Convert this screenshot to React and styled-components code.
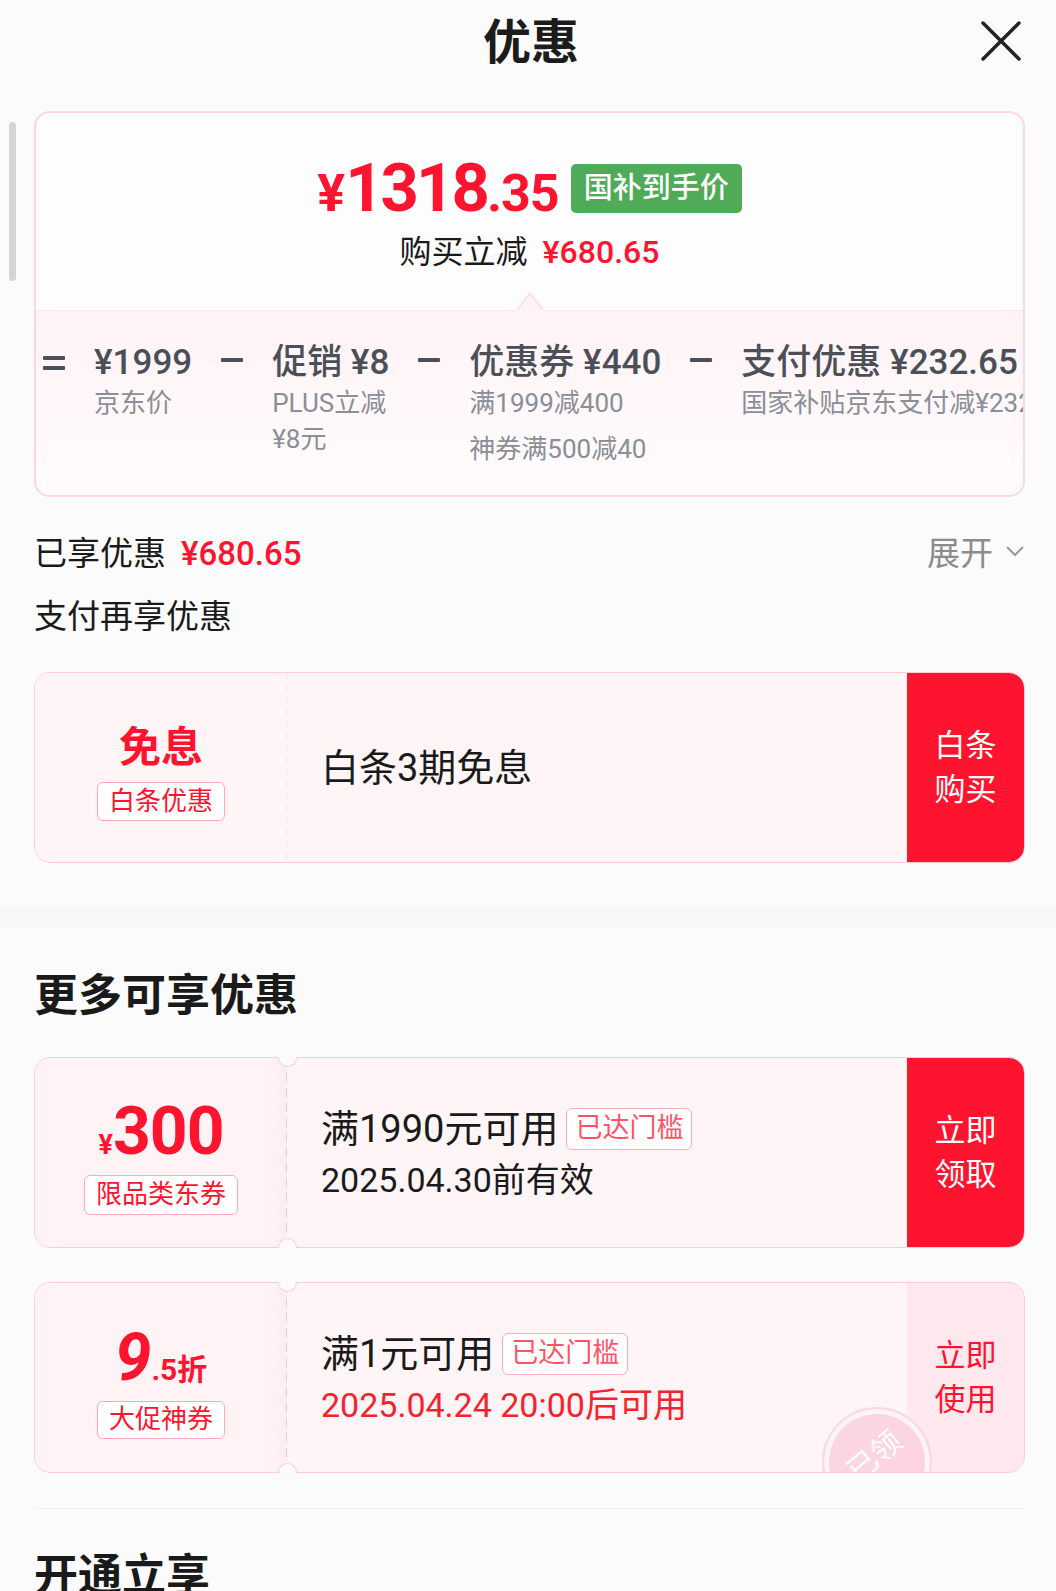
import React from "react"
import styled, { createGlobalStyle } from "styled-components"

const RED = "#ff1430"
const PINK_LINE = "#ffccd7"
const PAGE_BG = "#fbfbfb"

const GlobalStyle = createGlobalStyle`
  html, body { margin: 0; padding: 0; background: ${PAGE_BG}; }
  body { font-family: Roboto, "Noto Sans CJK SC", sans-serif; color: #1a1a1a; }
  * { box-sizing: border-box; }
`

const Page = styled.div`
  position: relative;
  width: 1056px;
  height: 1591px;
  overflow: hidden;
  background: ${PAGE_BG};
`
const ScrollThumb = styled.div`
  position: absolute;
  left: 9px;
  top: 122px;
  width: 7px;
  height: 159px;
  border-radius: 4px;
  background: #d4d4d4;
`
const Header = styled.header`
  display: grid;
  grid-template-columns: 1fr auto 1fr;
  align-items: center;
  height: 86px;
  padding: 0 34px;
`
const Title = styled.h1`
  grid-column: 2;
  margin: 0 0 0 6px;
  font-size: 48px;
  font-weight: 700;
  line-height: 1;
  color: #1c1c1c;
`
const Close = styled.button`
  justify-self: end;
  display: flex;
  width: 42px;
  height: 42px;
  margin-top: -4px;
  padding: 0;
  border: 0;
  background: none;
`
const Body = styled.main`
  padding: 0 31px 0 34px;
`

/* ---- top price card ---- */
const PriceCard = styled.section`
  margin-top: 25px;
  border: 2px solid #ffd6e0;
  border-radius: 16px;
  overflow: hidden;
  background: #fdfdfd;
`
const PriceArea = styled.div`
  position: relative;
  display: flex;
  flex-direction: column;
  align-items: center;
  padding: 42px 0 38px;
  border-bottom: 1px solid #ffe4ea;
`
const PriceRow = styled.div`
  display: flex;
  align-items: center;
  gap: 12px;
`
const Price = styled.div`
  display: flex;
  align-items: baseline;
  color: ${RED};
  font-weight: 700;
  line-height: 1;
`
const PricePart = styled.span`
  font-size: ${p => p.$size}px;
  letter-spacing: ${p => p.$ls || 0}px;
`
const GreenBadge = styled.span`
  height: 49px;
  padding: 0 13px;
  border-radius: 5px;
  background: #4fab57;
  color: #fff;
  font-size: 29px;
  font-weight: 500;
  line-height: 49px;
`
const Saved = styled.div`
  margin-top: 10px;
  font-size: 32px;
  line-height: 40px;
  color: #1a1a1a;
`
const RedNum = styled.span`
  margin-left: ${p => p.$ml || 0}px;
  color: ${RED};
  font-weight: 500;
`
const Pointer = styled.svg`
  position: absolute;
  left: 50%;
  bottom: -1px;
  width: 30px;
  height: 19px;
  transform: translateX(-50%);
`
const Breakdown = styled.div`
  display: flex;
  align-items: flex-start;
  gap: 29px;
  height: 184px;
  padding: 30px 0 0 7px;
  overflow: hidden;
  background: linear-gradient(#fff3f6, #fffbfc);
`
const Op = styled.span`
  flex: none;
  display: flex;
  flex-direction: column;
  justify-content: center;
  gap: 6px;
  width: 22px;
  height: 44px;
  transform: translateY(${p => (p.$kind === "minus" ? -3 : 0)}px);
  &::before, &::after {
    content: "";
    height: 4px;
    border-radius: 1px;
    background: #4b4f57;
  }
  &::after { display: ${p => (p.$kind === "minus" ? "none" : "block")}; }
`
const Part = styled.div`
  flex: none;
  display: flex;
  flex-direction: column;
`
const PartTitle = styled.div`
  font-size: 35px;
  font-weight: 500;
  line-height: 44px;
  color: #4b4f57;
  white-space: nowrap;
`
const PartSub = styled.div`
  font-size: 26px;
  line-height: 36px;
  color: #8a8e97;
  white-space: pre;
  & + & { margin-top: 10px; }
`

/* ---- rows ---- */
const SummaryRow = styled.div`
  display: flex;
  align-items: center;
  justify-content: space-between;
  height: 40px;
  margin-top: 34px;
  font-size: 33px;
`
const Expand = styled.span`
  display: flex;
  align-items: center;
  gap: 12px;
  color: #8c8c8c;
`
const Heading = styled.h2`
  margin: ${p => p.$top}px 0 0;
  font-size: ${p => p.$size}px;
  font-weight: ${p => p.$weight};
  line-height: ${p => p.$lh}px;
  color: #1a1a1a;
`

/* ---- tickets ---- */
const Ticket = styled.div`
  position: relative;
  margin-top: ${p => p.$top || 0}px;
`
const TicketBody = styled.div`
  position: relative;
  display: flex;
  height: 191px;
  border: 1.5px solid ${PINK_LINE};
  border-radius: 16px;
  overflow: hidden;
  background: #fff5f7;
`
const Notch = styled.span`
  position: absolute;
  left: 244px;
  ${p => (p.$side === "top" ? "top: 0;" : "bottom: 0;")}
  width: 19px;
  height: 10px;
  border: 1.5px solid ${PINK_LINE};
  ${p => (p.$side === "top" ? "border-top: none;" : "border-bottom: none;")}
  border-radius: ${p => (p.$side === "top" ? "0 0 10px 10px" : "10px 10px 0 0")};
  background: ${PAGE_BG};
`
const TicketLeft = styled.div`
  flex: none;
  display: flex;
  flex-direction: column;
  align-items: center;
  justify-content: center;
  width: 252px;
  padding-top: 9px;
  background: ${p => p.$coupon
    ? `repeating-linear-gradient(to bottom, #ffc6d1 0 9px, transparent 9px 15px) right top / 1.5px 100% no-repeat,
       linear-gradient(to right, #fff3f6 0, #fff3f6 calc(100% - 18px), #fdecf0 100%)`
    : `repeating-linear-gradient(to bottom, #ffdde4 0 6px, transparent 6px 12px) right top / 1px 100% no-repeat, #fff5f7`};
`
const Value = styled.div`
  display: flex;
  align-items: baseline;
  color: ${RED};
  font-weight: 700;
  line-height: 1;
`
const ValuePart = styled.span`
  font-size: ${p => p.$size}px;
  font-style: ${p => (p.$italic ? "italic" : "normal")};
  letter-spacing: ${p => p.$ls || 0}px;
`
const Free = styled.div`
  color: ${RED};
  font-size: 42px;
  font-weight: 700;
  line-height: 50px;
`
const Tag = styled.span`
  display: inline-block;
  height: ${p => p.$h || 40}px;
  margin-top: ${p => p.$top || 0}px;
  padding: 0 ${p => p.$pad || 11}px;
  border: 1.5px solid #ffa9b9;
  border-radius: 6px;
  background: #fff;
  color: ${p => (p.$soft ? "#ff5468" : RED)};
  font-size: ${p => p.$size || 26}px;
  line-height: ${p => (p.$h || 40) - 3}px;
  white-space: nowrap;
`
const TicketMid = styled.div`
  flex: 1;
  display: flex;
  flex-direction: column;
  justify-content: center;
  padding-left: 34px;
`
const CondRow = styled.div`
  display: flex;
  align-items: center;
  gap: 8px;
`
const Cond = styled.span`
  font-size: 38px;
  line-height: 46px;
  color: #1a1a1a;
`
const Valid = styled.div`
  margin-top: 8px;
  font-size: 34px;
  line-height: 40px;
  color: ${p => (p.$red ? "#f5222d" : "#1a1a1a")};
`
const Action = styled.div`
  flex: none;
  display: flex;
  flex-direction: column;
  align-items: center;
  justify-content: center;
  width: 117px;
  background: ${p => (p.$muted ? "#ffe8ee" : RED)};
  color: ${p => (p.$muted ? RED : "#fff")};
  font-size: 31px;
  line-height: 44px;
`
const Stamp = styled.div`
  position: absolute;
  left: 787px;
  top: 124px;
  display: flex;
  align-items: center;
  justify-content: center;
  width: 110px;
  height: 110px;
  border: 2.5px solid #fcd6df;
  border-radius: 50%;
  box-shadow: inset 0 0 0 5px rgba(255, 255, 255, 0.75);
  background: #fbd2dc;
  opacity: 0.9;
  span {
    color: #fff;
    font-size: 30px;
    transform: translate(-4px, -8px) rotate(-40deg);
  }
`
const Band = styled.div`
  height: 20px;
  margin: 45px -31px 0 -34px;
  background: #f6f7f9;
`
const CouponList = styled.div`
  display: flex;
  flex-direction: column;
  gap: 34px;
  margin-top: 33px;
`
const Divider = styled.hr`
  height: 1px;
  margin: 35px 0 0;
  border: 0;
  background: #efefef;
`

const parts = [
  { op: "eq", title: "¥1999", subs: ["京东价"] },
  { op: "minus", title: "促销 ¥8", subs: ["PLUS立减\n¥8元"] },
  { op: "minus", title: "优惠券 ¥440", subs: ["满1999减400", "神券满500减40"] },
  { op: "minus", title: "支付优惠 ¥232.65", subs: ["国家补贴京东支付减¥232.65"] },
]

const ActionText = ({ lines }) => lines.map(l => <span key={l}>{l}</span>)

export default function App() {
  return (
    <Page>
      <GlobalStyle />
      <ScrollThumb />
      <Header>
        <Title>优惠</Title>
        <Close aria-label="关闭">
          <svg width="42" height="42" viewBox="0 0 42 42">
            <path d="M3 3 L39 39 M39 3 L3 39" stroke="#222" strokeWidth="3.5" strokeLinecap="round" />
          </svg>
        </Close>
      </Header>

      <Body>
        <PriceCard>
          <PriceArea>
            <PriceRow>
              <Price>
                <PricePart $size={52}>¥</PricePart>
                <PricePart $size={67} $ls={-3}>1318</PricePart>
                <PricePart $size={52} $ls={-1}>.35</PricePart>
              </Price>
              <GreenBadge>国补到手价</GreenBadge>
            </PriceRow>
            <Saved>购买立减<RedNum $ml={15}>¥680.65</RedNum></Saved>
            <Pointer viewBox="0 0 30 19">
              <polygon points="1,19 15,1 29,19" fill="#fff3f6" stroke="#ffdbe3" strokeWidth="1.5" />
              <rect x="0" y="17.5" width="30" height="2" fill="#fff3f6" />
            </Pointer>
          </PriceArea>
          <Breakdown>
            {parts.map(p => (
              <React.Fragment key={p.title}>
                <Op $kind={p.op} />
                <Part>
                  <PartTitle>{p.title}</PartTitle>
                  {p.subs.map(s => <PartSub key={s}>{s}</PartSub>)}
                </Part>
              </React.Fragment>
            ))}
          </Breakdown>
        </PriceCard>

        <SummaryRow>
          <span>已享优惠<RedNum $ml={15}>¥680.65</RedNum></span>
          <Expand>
            展开
            <svg width="20" height="12" viewBox="0 0 20 12">
              <polyline points="2,2 10,10 18,2" fill="none" stroke="#999" strokeWidth="2" />
            </svg>
          </Expand>
        </SummaryRow>
        <Heading $top={26} $size={33} $weight={400} $lh={40}>支付再享优惠</Heading>

        <Ticket $top={35}>
          <TicketBody>
            <TicketLeft>
              <Free>免息</Free>
              <Tag $top={9} $h={39}>白条优惠</Tag>
            </TicketLeft>
            <TicketMid>
              <Cond>白条3期免息</Cond>
            </TicketMid>
            <Action><ActionText lines={["白条", "购买"]} /></Action>
          </TicketBody>
        </Ticket>
      </Body>

      <Band />

      <Body>
        <Heading $top={40} $size={44} $weight={700} $lh={56}>更多可享优惠</Heading>
        <CouponList>
          <Ticket>
            <TicketBody>
              <TicketLeft $coupon>
                <Value>
                  <ValuePart $size={27}>¥</ValuePart>
                  <ValuePart $size={66} $ls={-1}>300</ValuePart>
                </Value>
                <Tag $top={10}>限品类东券</Tag>
              </TicketLeft>
              <TicketMid>
                <CondRow>
                  <Cond>满1990元可用</Cond>
                  <Tag $soft $h={42} $size={27} $pad={8}>已达门槛</Tag>
                </CondRow>
                <Valid>2025.04.30前有效</Valid>
              </TicketMid>
              <Action><ActionText lines={["立即", "领取"]} /></Action>
            </TicketBody>
            <Notch $side="top" />
            <Notch $side="bottom" />
          </Ticket>

          <Ticket>
            <TicketBody>
              <TicketLeft $coupon>
                <Value>
                  <ValuePart $size={66} $italic>9</ValuePart>
                  <ValuePart $size={30}>.5折</ValuePart>
                </Value>
                <Tag $top={10} $h={38}>大促神券</Tag>
              </TicketLeft>
              <TicketMid>
                <CondRow>
                  <Cond>满1元可用</Cond>
                  <Tag $soft $h={42} $size={27} $pad={8}>已达门槛</Tag>
                </CondRow>
                <Valid $red>2025.04.24 20:00后可用</Valid>
              </TicketMid>
              <Action $muted><ActionText lines={["立即", "使用"]} /></Action>
              <Stamp><span>已领</span></Stamp>
            </TicketBody>
            <Notch $side="top" />
            <Notch $side="bottom" />
          </Ticket>
        </CouponList>

        <Divider />
        <Heading $top={39} $size={44} $weight={700} $lh={56}>开通立享</Heading>
      </Body>
    </Page>
  )
}
